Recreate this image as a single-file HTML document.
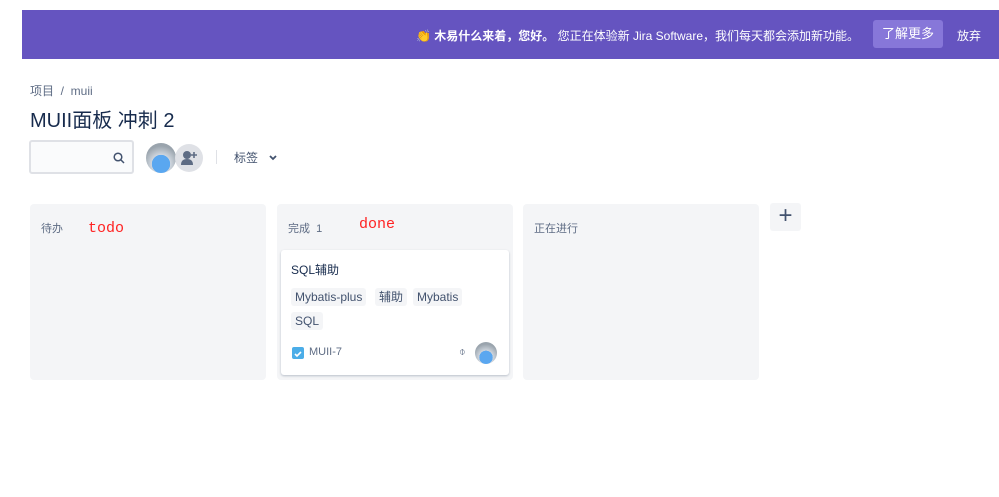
<!DOCTYPE html>
<html><head><meta charset="utf-8"><style>
*{box-sizing:border-box;margin:0;padding:0}
body{width:999px;height:497px;background:#fff;font-family:"Liberation Sans","Noto Sans CJK SC",sans-serif;position:relative;overflow:hidden;color:#172b4d}
.ban{position:absolute;left:22px;top:10px;width:977px;height:49px;background:#6554c0;color:#fff;font-size:12px}
.ban .t{position:absolute;right:140px;top:17px;white-space:nowrap}
.btn{position:absolute;left:851px;top:10px;width:70px;height:28px;background:#8777d9;border-radius:3px;text-align:center;line-height:28px;font-size:13px}
.ab{position:absolute;left:935px;top:17px;font-size:12px}
.abs{position:absolute}
.col{position:absolute;top:204px;height:176px;background:#f4f5f7;border-radius:4px}
.ch{position:absolute;top:16px;font-size:11px;color:#5e6c84}
.red{position:absolute;font-family:"Liberation Mono",monospace;color:#f22;font-size:15px}
.tag{position:absolute;background:#f4f5f7;border-radius:3px;font-size:12px;padding:1px 4px;line-height:16px;color:#42526e}
.av{position:absolute;border-radius:50%;background:radial-gradient(circle at 50% 70%,#5aa7f0 35%,#cfd6de 36%,#9aa4ad 70%)}
</style></head><body>
<div class="ban"><span class="t">👏 <b>木易什么来着，您好。</b> 您正在体验新 Jira Software，我们每天都会添加新功能。</span><div class="btn">了解更多</div><span class="ab">放弃</span></div>
<div class="abs" style="left:30px;top:82px;font-size:12px;color:#5e6c84">项目 &nbsp;/ &nbsp;muii</div>
<div class="abs" style="left:30px;top:104px;font-size:20px">MUII面板 冲刺 2</div>
<div class="abs" style="left:29px;top:140px;width:105px;height:34px;border:2px solid #dfe1e6;border-radius:3px;background:#fafbfc"><svg style="position:absolute;right:7px;top:10px" width="12" height="12"><circle cx="5" cy="5" r="3.8" fill="none" stroke="#42526e" stroke-width="1.5"/><line x1="8" y1="8" x2="11" y2="11" stroke="#42526e" stroke-width="1.5"/></svg></div>
<div class="av" style="left:146px;top:143px;width:30px;height:30px"></div>
<div class="abs" style="left:175px;top:144px;width:28px;height:28px;border-radius:50%;background:#dfe1e6"><svg width="28" height="28"><circle cx="12" cy="11" r="4" fill="#5e6c84"/><path d="M6 21q0-6 6-6t6 6z" fill="#5e6c84"/><path d="M19 8v6M16 11h6" stroke="#5e6c84" stroke-width="1.6"/></svg></div>
<div class="abs" style="left:216px;top:150px;width:1px;height:14px;background:#dfe1e6"></div>
<div class="abs" style="left:234px;top:149px;font-size:12px;color:#42526e">标签 &nbsp;&nbsp;<svg width="10" height="8"><path d="M2 2l3 3 3-3" stroke="#42526e" stroke-width="1.8" fill="none"/></svg></div>
<div class="col" style="left:30px;width:236px"><span class="ch" style="left:11px">待办</span><span class="red" style="left:58px;top:16px">todo</span></div>
<div class="col" style="left:277px;width:236px"><span class="ch" style="left:11px">完成 &nbsp;1</span><span class="red" style="left:82px;top:12px">done</span>
<div class="abs" style="left:4px;top:46px;width:228px;height:125px;background:#fff;border-radius:3px;box-shadow:0 1px 2px rgba(9,30,66,.25)">
<div class="abs" style="left:10px;top:11px;font-size:12px">SQL辅助</div>
<div class="tag" style="left:10px;top:38px">Mybatis-plus</div><div class="tag" style="left:94px;top:38px">辅助</div><div class="tag" style="left:132px;top:38px">Mybatis</div><div class="tag" style="left:10px;top:62px">SQL</div>
<div class="abs" style="left:11px;top:97px;width:12px;height:12px;background:#4bade8;border-radius:2px"><svg width="12" height="12"><path d="M3 6l2 2 4-4" stroke="#fff" stroke-width="1.6" fill="none"/></svg></div>
<div class="abs" style="left:28px;top:96px;font-size:11px;color:#5e6c84">MUII-7</div>
<div class="abs" style="left:178px;top:96px;font-size:11px;color:#5e6c84">⌽</div>
<div class="av" style="left:194px;top:92px;width:22px;height:22px"></div>
</div></div>
<div class="col" style="left:523px;width:236px"><span class="ch" style="left:11px">正在进行</span></div>
<div class="abs" style="left:770px;top:203px;width:31px;height:28px;background:#f4f5f7;border-radius:3px;text-align:center;font-size:24px;line-height:26px;color:#42526e">+</div>
</body></html>
